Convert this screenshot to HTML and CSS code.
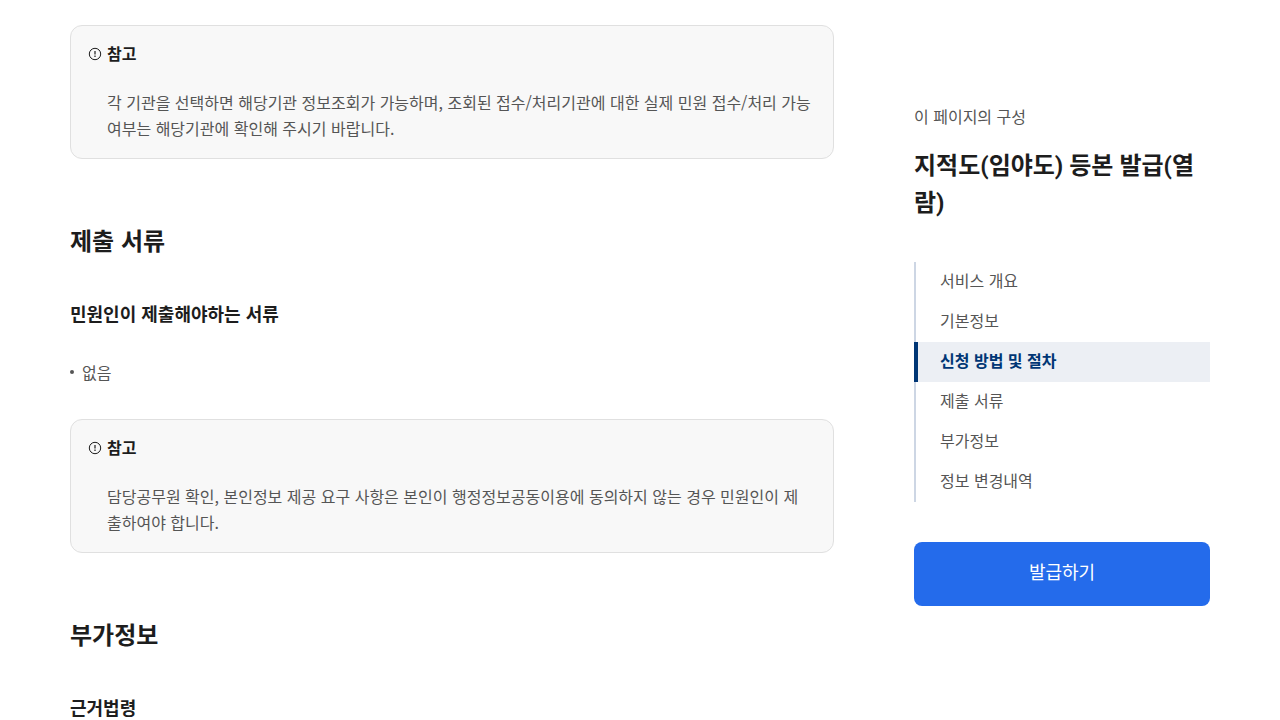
FILE: index.html
```html
<!DOCTYPE html>
<html lang="ko">
<head>
    <meta charset="UTF-8">
    <meta name="viewport" content="width=device-width, initial-scale=1.0">
    <title>지적도(임야도) 등본 발급(열람)</title>
    <link rel="stylesheet" href="styles.css">
</head>
<body>
    <div class="container">
        <main class="content">
            <section class="note">
                <h4 class="note-title">
                    <svg class="note-icon" viewBox="0 0 14 14" aria-hidden="true">
                        <circle cx="7" cy="7" r="5.7" fill="none" stroke="currentColor" stroke-width="1"/>
                        <path d="M7 4v3.6M7 8.6v1.3" fill="none" stroke="currentColor" stroke-width="1.2"/>
                    </svg>
                    참고
                </h4>
                <p>각 기관을 선택하면 해당기관 정보조회가 가능하며, 조회된 접수/처리기관에 대한 실제 민원 접수/처리 가능여부는 해당기관에 확인해 주시기 바랍니다.</p>
            </section>

            <section class="section" id="documents">
                <h2>제출 서류</h2>
                <h3>민원인이 제출해야하는 서류</h3>
                <ul class="dot-list">
                    <li>없음</li>
                </ul>
                <div class="note">
                    <h4 class="note-title">
                        <svg class="note-icon" viewBox="0 0 14 14" aria-hidden="true">
                            <circle cx="7" cy="7" r="5.7" fill="none" stroke="currentColor" stroke-width="1"/>
                            <path d="M7 4v3.6M7 8.6v1.3" fill="none" stroke="currentColor" stroke-width="1.2"/>
                        </svg>
                        참고
                    </h4>
                    <p>담당공무원 확인, 본인정보 제공 요구 사항은 본인이 행정정보공동이용에 동의하지 않는 경우 민원인이 제출하여야 합니다.</p>
                </div>
            </section>

            <section class="section" id="extra">
                <h2>부가정보</h2>
                <h3>근거법령</h3>
            </section>
        </main>

        <aside class="side">
            <p class="side-caption">이 페이지의 구성</p>
            <h2 class="side-title">지적도(임야도) 등본 발급(열람)</h2>
            <nav class="side-nav">
                <a href="#summary">서비스 개요</a>
                <a href="#basic">기본정보</a>
                <a href="#apply" class="active">신청 방법 및 절차</a>
                <a href="#documents">제출 서류</a>
                <a href="#extra">부가정보</a>
                <a href="#history">정보 변경내역</a>
            </nav>
            <button type="button" class="btn-issue">발급하기</button>
        </aside>
    </div>
</body>
</html>
```

FILE: styles.css
```css
* {
    box-sizing: border-box;
}

html {
    overflow: hidden;
}

body {
    margin: 0;
    background: #fff;
    color: #1d1d1d;
    font-family: "Noto Sans CJK KR", sans-serif;
    font-size: 16px;
    line-height: 26px;
}

h2, h3, h4, p, ul {
    margin: 0;
    padding: 0;
}

.container {
    display: flex;
    align-items: flex-start;
    gap: 80px;
    padding: 25px 70px 0;
}

.content {
    flex: 1;
    min-width: 0;
}

.note {
    padding: 14px 21px 17px 17px;
    border: 1px solid #e0e0e0;
    border-radius: 12px;
    background: #f8f8f8;
}

.note-title {
    display: flex;
    align-items: center;
    gap: 5px;
    font-size: 16px;
    font-weight: 700;
}

.note-icon {
    width: 14px;
    height: 14px;
    margin-top: 2px;
}

.note p {
    margin-top: 23px;
    padding-left: 19px;
    color: #555;
    word-break: break-all;
}

.section {
    margin-top: 63px;
}

.section h2 {
    font-size: 24px;
    line-height: 36px;
}

.section h3 {
    margin-top: 40px;
    font-size: 18px;
    line-height: 30px;
}

.dot-list {
    margin: 31px 0 34px;
    list-style: none;
    color: #555;
}

.dot-list li {
    display: flex;
    align-items: center;
    gap: 8px;
}

.dot-list li::before {
    content: "";
    width: 4px;
    height: 4px;
    border-radius: 50%;
    background: #555;
}

.side {
    width: 296px;
    padding-top: 78px;
}

.side-caption {
    color: #555;
}

.side-title {
    margin: 19px 0 40px;
    font-family: Roboto, "Noto Sans CJK KR", sans-serif;
    font-size: 24px;
    line-height: 37px;
}

.side-nav {
    display: flex;
    flex-direction: column;
}

.side-nav a {
    padding: 5px 24px 9px;
    border-left: 2px solid #cdd6e4;
    color: #555;
    text-decoration: none;
}

.side-nav .active {
    padding-left: 22px;
    border-left: 4px solid #003675;
    background: #eceff4;
    color: #003675;
    font-weight: 700;
}

.btn-issue {
    width: 100%;
    height: 64px;
    margin-top: 40px;
    padding-bottom: 8px;
    border: 0;
    border-radius: 8px;
    background: #246beb;
    color: #fff;
    font-family: inherit;
    font-size: 18px;
    cursor: pointer;
}
```
